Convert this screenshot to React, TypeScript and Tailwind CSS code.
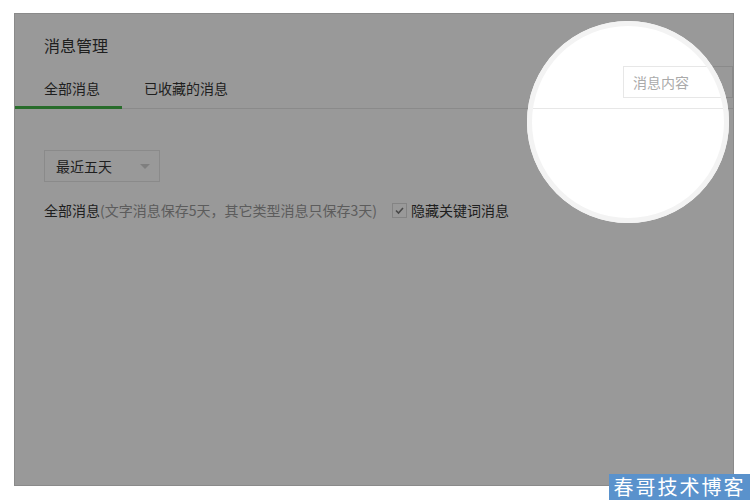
import React from "react";

export default function App() {
  return (
    <div
      className="relative w-[750px] h-[500px] bg-white overflow-hidden"
      style={{ fontFamily: '"Noto Sans CJK SC", "Noto Sans", sans-serif' }}
    >
      <div className="pt-[13px] pl-[14px]">
        <div className="relative w-[720px] h-[473px] overflow-hidden">
          <div className="w-full h-full border border-[#e7e7e7] bg-white flex flex-col">
            <div className="pt-[19px] pl-[29px] h-[43px] text-[16px] leading-[24px] text-[#353535]">
              消息管理
            </div>
            <div className="flex h-[52px] border-b border-[#e7e7e7]">
              <div className="h-[52px] w-[107px] pl-[29px] pt-[21px] border-b-[3px] border-[#44b549] text-[14px] leading-[20px] text-[#353535]">
                全部消息
              </div>
              <div className="h-[52px] pl-[22px] pt-[21px] text-[14px] leading-[20px] text-[#353535]">
                已收藏的消息
              </div>
              <div className="ml-auto mt-[9px] w-[110px] h-[32px] border border-[#e7e7e7] pl-[9px] text-[14px] leading-[30px] text-[#aaaaaa]">
                消息内容
              </div>
            </div>
            <div className="pl-[29px] pt-[41px]">
              <div className="w-[116px] h-[32px] border border-[#e7e7e7] flex items-center pl-[11px] pr-[9px] text-[14px] text-[#353535]">
                <span>最近五天</span>
                <span className="ml-auto w-0 h-0 border-l-[5px] border-r-[5px] border-t-[5px] border-l-transparent border-r-transparent border-t-[#d4d4d4]" />
              </div>
              <div className="mt-[18px] flex items-center h-[20px] text-[14px] leading-[20px]">
                <span className="text-[#353535]">全部消息</span>
                <span className="text-[#9a9a9a]">(文字消息保存5天，其它类型消息只保存3天)</span>
                <span className="ml-[15px] w-[15px] h-[15px] border border-[#dcdcdc] flex items-center justify-center">
                  <svg width="11" height="11" viewBox="0 0 11 11">
                    <path d="M2 5.5 L4.5 8 L9 3" fill="none" stroke="#7a7a7a" strokeWidth="1.6" />
                  </svg>
                </span>
                <span className="ml-[4px] text-[#353535]">隐藏关键词消息</span>
              </div>
            </div>
          </div>
          <div className="absolute left-[513px] top-[8px] w-[202px] h-[202px] rounded-full border-[5px] border-[#f3f3f3] shadow-[0_0_0_1200px_rgba(0,0,0,0.4)]" />
        </div>
      </div>
      <div className="absolute right-0 bottom-0 w-[141px] h-[26px] bg-[#5a92cc] text-white flex items-center justify-center">
        <span className="text-[20px] leading-[24px] tracking-[2px]">春哥技术博客</span>
      </div>
    </div>
  );
}
